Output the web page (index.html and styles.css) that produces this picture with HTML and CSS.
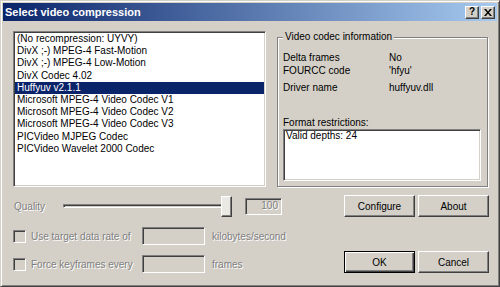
FILE: index.html
```html
<!DOCTYPE html>
<html lang="en">
<head>
    <meta charset="UTF-8">
    <title>Select video compression</title>
    <link rel="stylesheet" href="styles.css">
</head>
<body>

    <div class="window">
        <!-- title bar -->
        <div class="titlebar">
            <span class="title">Select video compression</span>
            <div class="title-buttons">
                <span class="tbtn help">?</span>
                <span class="tbtn">
                    <svg width="8" height="7" viewBox="0 0 8 7">
                        <path d="M0 0h2l2 2.5L6 0h2L5 3.5 8 7H6L4 4.5 2 7H0l3-3.5z" fill="#000"/>
                    </svg>
                </span>
            </div>
        </div>

        <div class="body">
            <!-- codec list + info -->
            <div class="top">
                <ul class="codec-list">
                    <li>(No recompression: UYVY)</li>
                    <li>DivX ;-) MPEG-4 Fast-Motion</li>
                    <li>DivX ;-) MPEG-4 Low-Motion</li>
                    <li>DivX Codec 4.02</li>
                    <li class="selected">Huffyuv v2.1.1</li>
                    <li>Microsoft MPEG-4 Video Codec V1</li>
                    <li>Microsoft MPEG-4 Video Codec V2</li>
                    <li>Microsoft MPEG-4 Video Codec V3</li>
                    <li>PICVideo MJPEG Codec</li>
                    <li>PICVideo Wavelet 2000 Codec</li>
                </ul>

                <fieldset class="info">
                    <legend>Video codec information</legend>
                    <div class="info-grid">
                        <span>Delta frames</span><span>No</span>
                        <span>FOURCC code</span><span>'hfyu'</span>
                        <span>Driver name</span><span>huffyuv.dll</span>
                    </div>
                    <div class="restrict-label">Format restrictions:</div>
                    <div class="restrict-box">Valid depths: 24</div>
                </fieldset>
            </div>

            <!-- quality -->
            <div class="quality-row">
                <span class="quality-label disabled">Quality</span>
                <div class="slider">
                    <div class="track"></div>
                    <div class="thumb"></div>
                </div>
                <div class="value-box disabled">100</div>
                <div class="buttons">
                    <button class="btn">Configure</button>
                    <button class="btn">About</button>
                </div>
            </div>

            <!-- options + ok/cancel -->
            <div class="options">
                <div class="option-list">
                    <div class="option-row">
                        <div class="check-label">
                            <span class="checkbox"></span>
                            <span class="disabled">Use target data rate of</span>
                        </div>
                        <span class="field"></span>
                        <span class="unit disabled">kilobytes/second</span>
                    </div>
                    <div class="option-row">
                        <div class="check-label">
                            <span class="checkbox"></span>
                            <span class="disabled">Force keyframes every</span>
                        </div>
                        <span class="field"></span>
                        <span class="unit disabled">frames</span>
                    </div>
                </div>
                <div class="buttons">
                    <button class="btn default">OK</button>
                    <button class="btn">Cancel</button>
                </div>
            </div>
        </div>
    </div>

</body>
</html>
```

FILE: styles.css
```css
/* base */
body {
    margin: 0;
    padding: 0;
    font-family: 'Liberation Sans', Arial, sans-serif;
    font-size: 10px;
    color: #000;
    background-color: #d4d0c8;
}

/* window frame */
.window {
    box-sizing: border-box;
    width: 500px;
    height: 287px;
    padding: 2px;
    background-color: #d4d0c8;
    border: 1px solid;
    border-color: #d4d0c8 #404040 #404040 #d4d0c8;
    box-shadow: inset 1px 1px #fff, inset -1px -1px #808080;
}

/* title bar */
.titlebar {
    height: 18px;
    display: flex;
    align-items: center;
    justify-content: space-between;
    background: linear-gradient(to right, #0a246a, #a6caf0);
}

.title {
    padding-left: 2px;
    color: #fff;
    font-weight: bold;
    font-size: 11px;
}

.title-buttons {
    display: flex;
    gap: 2px;
    margin-right: 2px;
}

.tbtn {
    box-sizing: border-box;
    width: 14px;
    height: 13px;
    display: flex;
    align-items: center;
    justify-content: center;
    background-color: #d4d0c8;
    border: 1px solid;
    border-color: #fff #404040 #404040 #fff;
    box-shadow: inset -1px -1px #808080;
}

.tbtn.help {
    font-weight: bold;
    font-size: 10px;
    line-height: 1;
}

/* body */
.body {
    padding: 10px 8px 0 10px;
}

.top {
    display: flex;
}

/* list box */
.codec-list {
    box-sizing: border-box;
    width: 253px;
    height: 156px;
    margin: 0;
    padding: 1px;
    list-style: none;
    background-color: #fff;
    border: 1px solid;
    border-color: #808080 #fff #fff #808080;
    box-shadow: inset 1px 1px #404040, inset -1px -1px #d4d0c8;
}

.codec-list li {
    height: 12.2px;
    line-height: 12.2px;
    padding-left: 2px;
    white-space: nowrap;
}

.codec-list li.selected {
    background-color: #0a246a;
    color: #fff;
}

/* group box */
.info {
    box-sizing: border-box;
    width: 211px;
    height: 156px;
    margin: 0 0 0 11px;
    padding: 7px 6px 0 5px;
    border: 1px solid #808080;
    box-shadow: inset 1px 1px #fff, 1px 1px #fff;
}

.info legend {
    padding: 0 2px;
    line-height: 12px;
    background-color: #d4d0c8;
}

.info-grid {
    display: grid;
    grid-template-columns: 106px auto;
    grid-template-rows: 14px 13px 20px;
    align-items: center;
}

.restrict-label {
    margin-top: 20px;
    line-height: 12px;
}

.restrict-box {
    box-sizing: border-box;
    height: 52px;
    padding: 0 2px;
    line-height: 12px;
    background-color: #fff;
    border: 1px solid;
    border-color: #808080 #fff #fff #808080;
    box-shadow: inset 1px 1px #404040, inset -1px -1px #d4d0c8;
}

/* disabled text */
.disabled {
    color: #808080;
    text-shadow: 1px 1px 0 #fff;
}

/* quality row */
.quality-row {
    height: 22px;
    margin-top: 8px;
    display: flex;
    align-items: center;
}

.quality-label {
    width: 50px;
    padding-left: 1px;
    box-sizing: border-box;
}

.slider {
    width: 169px;
    height: 21px;
    display: flex;
    align-items: center;
}

.track {
    flex: 1;
    height: 4px;
    box-sizing: border-box;
    border: 1px solid;
    border-color: #808080 #fff #fff #808080;
    box-shadow: inset 1px 1px #404040;
}

.thumb {
    box-sizing: border-box;
    width: 11px;
    height: 21px;
    margin-left: -8px;
    background-color: #ebe9e4;
    border: 1px solid;
    border-color: #fff #404040 #404040 #fff;
    box-shadow: inset -1px -1px #808080;
}

.value-box {
    box-sizing: border-box;
    width: 37px;
    height: 17px;
    margin-left: 13px;
    padding-right: 3px;
    line-height: 13px;
    text-align: right;
    border: 1px solid;
    border-color: #808080 #fff #fff #808080;
    box-shadow: inset 1px 1px #404040, inset -1px -1px #d4d0c8;
}

/* buttons */
.buttons {
    margin-left: auto;
    display: flex;
    gap: 3px;
}

.btn {
    box-sizing: border-box;
    width: 71px;
    height: 22px;
    padding: 0;
    font-family: 'Liberation Sans', Arial, sans-serif;
    font-size: 10px;
    color: #000;
    background-color: #d4d0c8;
    border: 1px solid;
    border-color: #fff #404040 #404040 #fff;
    box-shadow: inset -1px -1px #808080;
}

.btn.default {
    border: 1px solid #000;
    box-shadow: inset 1px 1px #fff, inset -1px -1px #404040, inset -2px -2px #808080;
}

/* options */
.options {
    display: flex;
    align-items: flex-end;
}

.option-list {
    display: flex;
    flex-direction: column;
    gap: 10px;
    margin-top: 10px;
}

.option-row {
    height: 18px;
    display: flex;
    align-items: center;
}

.check-label {
    width: 129px;
    display: flex;
    align-items: center;
    gap: 5px;
}

.checkbox {
    box-sizing: border-box;
    width: 13px;
    height: 13px;
    border: 1px solid;
    border-color: #808080 #fff #fff #808080;
    box-shadow: inset 1px 1px #404040, inset -1px -1px #d4d0c8;
}

.field {
    box-sizing: border-box;
    width: 63px;
    height: 18px;
    border: 1px solid;
    border-color: #808080 #fff #fff #808080;
    box-shadow: inset 1px 1px #404040, inset -1px -1px #d4d0c8;
}

.unit {
    margin-left: 7px;
}
```
